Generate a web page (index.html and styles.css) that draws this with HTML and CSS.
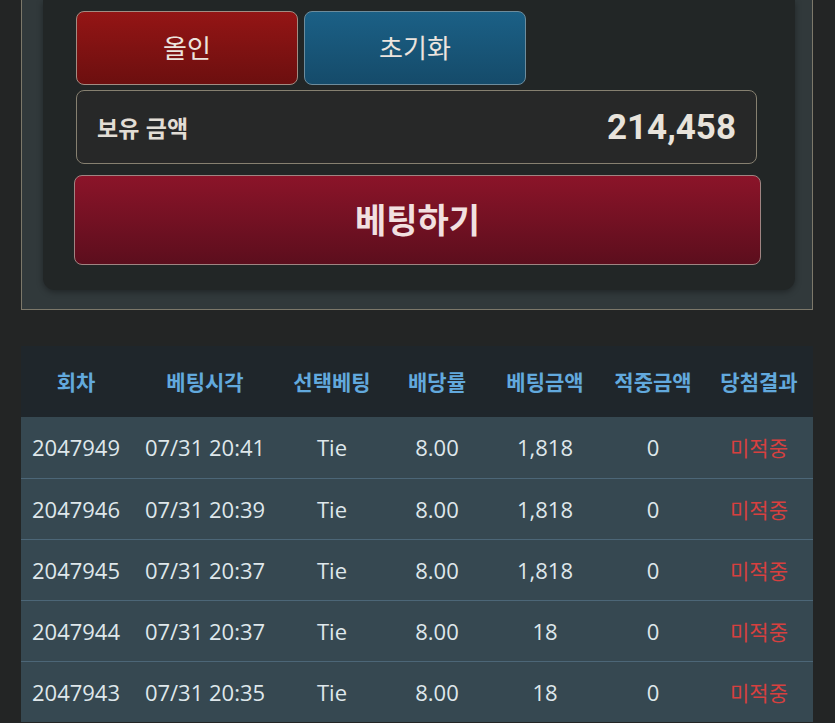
FILE: index.html
```html
<!DOCTYPE html>
<html lang="ko">
<head>
<meta charset="utf-8">
<link rel="stylesheet" href="styles.css">
</head>
<body>
<div class="page">
  <section class="panel">
    <div class="card">
      <div class="quick-row">
        <button class="btn btn-red">올인</button>
        <button class="btn btn-blue">초기화</button>
      </div>
      <div class="balance">
        <span class="balance-label">보유 금액</span>
        <span class="balance-value">214,458</span>
      </div>
      <button class="bet-btn">베팅하기</button>
    </div>
  </section>

  <table class="history">
    <thead>
      <tr>
        <th class="c1">회차</th>
        <th class="c2">베팅시각</th>
        <th class="c3">선택베팅</th>
        <th class="c4">배당률</th>
        <th class="c5">베팅금액</th>
        <th class="c6">적중금액</th>
        <th class="c7">당첨결과</th>
      </tr>
    </thead>
    <tbody>
      <tr><td>2047949</td><td>07/31 20:41</td><td>Tie</td><td>8.00</td><td>1,818</td><td>0</td><td class="lose">미적중</td></tr>
      <tr><td>2047946</td><td>07/31 20:39</td><td>Tie</td><td>8.00</td><td>1,818</td><td>0</td><td class="lose">미적중</td></tr>
      <tr><td>2047945</td><td>07/31 20:37</td><td>Tie</td><td>8.00</td><td>1,818</td><td>0</td><td class="lose">미적중</td></tr>
      <tr><td>2047944</td><td>07/31 20:37</td><td>Tie</td><td>8.00</td><td>18</td><td>0</td><td class="lose">미적중</td></tr>
      <tr><td>2047943</td><td>07/31 20:35</td><td>Tie</td><td>8.00</td><td>18</td><td>0</td><td class="lose">미적중</td></tr>
    </tbody>
  </table>
</div>
</body>
</html>
```

FILE: styles.css
```css
* { box-sizing: border-box; }
html, body {
  margin: 0;
  padding: 0;
  background: #232525;
  height: 100%;
  overflow: hidden;
}
body {
  font-family: "Noto Sans", "Noto Sans CJK KR", sans-serif;
  color: #e4e0d8;
}
.page {
  padding: 0 22px 0 21px;
}
.panel {
  border: 1px solid #7c786a;
  border-top: none;
  background: #31393b;
  padding: 0 17px 19px 21px;
}
.card {
  background: #222626;
  border-radius: 0 0 12px 12px;
  box-shadow: 0 2px 6px rgba(0,0,0,0.35);
  padding: 11px 34px 25px 31px;
  display: flex;
  flex-direction: column;
}
.quick-row {
  display: grid;
  grid-template-columns: repeat(3, 222px);
  gap: 6px;
  margin: 0 0 0 2px;
}
.btn {
  height: 74px;
  border-radius: 8px;
  border: 1px solid #a28c82;
  font-family: "Noto Sans CJK KR", sans-serif;
  font-size: 26px;
  font-weight: 400;
  color: #ece4de;
  padding: 0 0 4px;
  cursor: pointer;
}
.btn-red {
  background: linear-gradient(#941515, #6c0f0f);
}
.btn-blue {
  background: linear-gradient(#1b6086, #154b6a);
  border-color: #6d8c9c;
}
.balance {
  margin: 5px 4px 0 2px;
  height: 74px;
  border: 1px solid #868070;
  border-radius: 8px;
  background: #272828;
  display: flex;
  align-items: center;
  justify-content: space-between;
  padding: 0 20px 0 20px;
}
.balance-label {
  font-family: "Noto Sans CJK KR", sans-serif;
  font-weight: 700;
  font-size: 23px;
  color: #e2ddd5;
}
.balance-value {
  font-family: Roboto, sans-serif;
  font-weight: 700;
  font-size: 35px;
  color: #e8e3db;
  padding-top: 0;
}
.bet-btn {
  margin-top: 11px;
  height: 90px;
  border-radius: 8px;
  border: 1px solid #a08482;
  background: linear-gradient(#8b1429, #5c0e1d);
  font-family: "Noto Sans CJK KR", sans-serif;
  font-weight: 700;
  font-size: 34px;
  color: #f2e0e0;
  padding: 0 0 4px;
}

.history {
  margin-top: 36px;
  width: 792px;
  border-collapse: collapse;
  table-layout: fixed;
}
.history th {
  height: 71px;
  background: #1f262b;
  color: #62a9dd;
  font-family: "Noto Sans CJK KR", sans-serif;
  font-weight: 700;
  font-size: 21px;
  text-align: center;
  padding: 0 0 2px;
}
.c1 { width: 110px; }
.c2 { width: 148px; }
.c3 { width: 106px; }
.c4 { width: 104px; }
.c5 { width: 112px; }
.c6 { width: 104px; }
.c7 { width: 108px; }
.history td {
  height: 61px;
  background: #364851;
  border-top: 1px solid #4c6677;
  color: #dfe7eb;
  font-family: "Open Sans", "Noto Sans CJK KR", sans-serif;
  font-size: 22px;
  text-align: center;
  padding: 0;
  white-space: nowrap;
}
.history tbody tr:first-child td { border-top: none; }
.history td.lose {
  color: #d6403f;
  font-family: "Noto Sans CJK KR", sans-serif;
  font-size: 21px;
}
```
